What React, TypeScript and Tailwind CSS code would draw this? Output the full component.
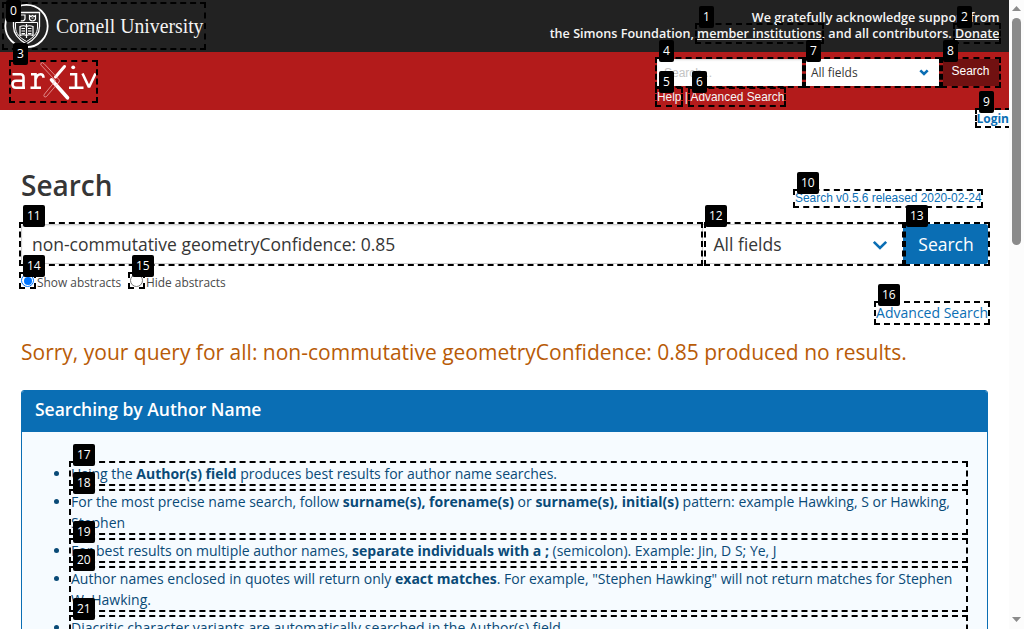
import React from "react";

type MarkData = { n: number; x: number; y: number; w: number; h: number };

const marks: MarkData[] = [
  { n: 0, x: 2, y: 2, w: 204, h: 48 },
  { n: 1, x: 695, y: 23, w: 129, h: 21 },
  { n: 2, x: 953, y: 23, w: 48, h: 21 },
  { n: 3, x: 9, y: 60, w: 89, h: 43 },
  { n: 4, x: 655, y: 57, w: 149, h: 31 },
  { n: 5, x: 655, y: 87, w: 28, h: 20 },
  { n: 6, x: 688, y: 87, w: 98, h: 20 },
  { n: 7, x: 804, y: 57, w: 137, h: 31 },
  { n: 8, x: 941, y: 57, w: 60, h: 31 },
  { n: 9, x: 975, y: 108, w: 36, h: 20 },
  { n: 10, x: 793, y: 189, w: 190, h: 19 },
  { n: 11, x: 19, y: 222, w: 684, h: 44 },
  { n: 12, x: 704, y: 222, w: 200, h: 44 },
  { n: 13, x: 904, y: 222, w: 86, h: 44 },
  { n: 14, x: 19, y: 272, w: 17, h: 17 },
  { n: 15, x: 128, y: 272, w: 17, h: 17 },
  { n: 16, x: 874, y: 301, w: 116, h: 24 },
  { n: 17, x: 69, y: 461, w: 899, h: 25 },
  { n: 18, x: 69, y: 489, w: 899, h: 46 },
  { n: 19, x: 69, y: 538, w: 899, h: 25 },
  { n: 20, x: 69, y: 566, w: 899, h: 46 },
  { n: 21, x: 69, y: 615, w: 899, h: 25 },
];

/* Badges of the abutting fields sit slightly left of their outlines. */
const badgeDx: Record<number, number> = { 7: 2, 8: 2, 12: 1, 13: 2 };

function Marks() {
  return (
    <div className="pointer-events-none absolute inset-0 overflow-hidden">
      {marks.map((m) => (
        <div
          key={m.n}
          className="absolute border-2 border-dashed border-black"
          style={{ left: m.x, top: m.y, width: m.w, height: m.h }}
        />
      ))}
      {marks.map((m) => (
        <span
          key={m.n}
          className="absolute rounded-[2px] bg-black px-1 py-0.5 text-[12px] leading-[18px] text-white"
          style={{
            left: m.x + (badgeDx[m.n] ?? 4),
            top: Math.max(0, m.y - (m.h === 20 && m.n < 7 ? 16 : 17)),
          }}
        >
          {m.n}
        </span>
      ))}
    </div>
  );
}

function CornellLogo() {
  return (
    <svg className="block h-[48px] w-[204px]" viewBox="0 0 204 48">
      <g fill="none" stroke="#fff">
        <circle cx="24.5" cy="24" r="21.2" strokeWidth="1.8" />
        <path d="M11.5 10.5h26v14c0 8-5 13-13 17.500c-8-4.500-13-9.500-13-17.500z" strokeWidth="1.3" />
        <path d="M13.500 20.500h22v4.500c0 6.500-4 10.500-11 14.500c-7-4-11-8-11-14.500z" strokeWidth="1" />
        <path d="M18 24.500q3.500-1.500 6.500 0q3-1.500 6.500 0v9q-3.500-1.500-6.500 0q-3-1.500-6.500 0zM24.500 22v14" strokeWidth="1.200" />
        <path d="M19.500 26.500h3.500M19.500 29h3.500M19.500 31.500h3.500M26 26.500h3.500M26 29h3.500M26 31.500h3.500" strokeWidth="1" />
        <path d="M17 13h6v3.500q0 2-3 2.500q-3-.5-3-2.500zM27.500 13.500l1.500 1l1.500-1l1.500 1l1.500-1v3q0 2-3 2.500q-3-.5-3-2.500zM29.500 16h2" strokeWidth="1.200" />
      </g>
      <text
        x="54"
        y="30.700"
        fill="#f4f4f4"
        fontSize="20.500"
        textLength="147.500"
        lengthAdjust="spacingAndGlyphs"
        fontFamily="'Palatino Linotype', Palatino, 'Liberation Serif', serif"
      >
        Cornell University
      </text>
    </svg>
  );
}

function ArxivLogo() {
  return (
    <svg className="block h-[39px] w-[86px]" viewBox="0 0 86 39" fill="none">
      <g stroke="#fff" strokeWidth="2.600">
        <path d="M1.500 12.300h8q3 0 3 3v11.200M12.500 18.800h-7.500q-3.500 0-3.500 3.500q0 3.500 3.500 3.500h9" />
        <path d="M20 12.300h4.500v13.500M19.500 25.800h10.500M24.500 17.500q1.500-5.200 5-5.200q3 0 3 3.500" />
        <path d="M59 12.300h6v13.500M58 25.800h14.500" />
        <path d="M71.500 11.500l6.500 13.800l6.500-13.800" strokeLinejoin="bevel" />
      </g>
      <circle cx="62.200" cy="5.300" r="1.900" fill="#fff" />
      <path d="M40.500 17.800l16 18" stroke="#fff" strokeWidth="3.600" strokeLinecap="round" />
      <path d="M53.500 4.500l-9 10.500" stroke="#fff" strokeWidth="3" strokeLinecap="round" />
      <path
        d="M30 1.300q1.500-1.500 3 .3l15 16q1 1.200 0 2.400l-12.500 14.500q-1.500 1-2.300 0q-.8-1 .3-2.400l11-13.500l-14.200-15.200q-1-1-.3-2.100z"
        stroke="#f0b9b9"
        strokeWidth=".7"
      />
    </svg>
  );
}

function Header() {
  return (
    <header>
      <div className="flex h-[52px] items-start justify-between bg-[#222] pt-0.5 pl-0.5">
        <CornellLogo />
        <p className="pt-2 pr-[9.500px] text-right text-[12.600px] leading-4 font-semibold text-[#f5f5f5]">
          We gratefully acknowledge support from
          <br />
          the Simons Foundation, <a className="underline">member institutions</a>, and all contributors.{" "}
          <a className="underline">Donate</a>
        </p>
      </div>
      <div className="flex h-[58px] justify-between bg-[#b31b1b] pr-[10px] pl-[11px]">
        <div className="pt-[10px]">
          <ArxivLogo />
        </div>
        <div className="w-[342px] pt-[7px]">
          <div className="flex h-[27px]">
            <div className="flex w-[145px] items-center bg-white pl-[7px] font-['Liberation_Sans',sans-serif] text-[12px] text-[#c4c4c4] shadow-[inset_0_1px_2px_rgba(10,10,10,0.15)]">
              Search...
            </div>
            <div className="ml-1 flex w-[133px] items-center justify-between bg-white pr-[10px] pl-[5px] text-[12px] text-[#363636]">
              All fields
              <svg className="h-[7px] w-[10px]" viewBox="0 0 10 7" fill="none">
                <path d="M1.300 1.300L5 5l3.700-3.700" stroke="#0a6eb4" strokeWidth="2.600" />
              </svg>
            </div>
            <div className="ml-1 flex w-14 items-center justify-center bg-[#711111] pr-px pb-[3px] font-['Liberation_Sans',sans-serif] text-[12px] text-white">
              Search
            </div>
          </div>
          <p className="pt-[3px] font-['Liberation_Sans',sans-serif] text-[11.900px] leading-4 text-[#f5f5f5]">
            Help | Advanced Search
          </p>
        </div>
      </div>
    </header>
  );
}

function SearchForm() {
  return (
    <section className="pr-[21px] pl-[21px]">
      <div className="flex items-start justify-between">
        <h1 className="pt-[37px] text-[28px] leading-[42px] font-semibold text-[#363636]">Search</h1>
        <a className="pt-[62px] pr-[6.500px] font-['Liberation_Sans',sans-serif] text-[11.900px] leading-[18px] text-[#0a6eb4]">
          Search v0.5.6 released 2020-02-24
        </a>
      </div>
      <div className="mt-[17px] flex h-10 text-[17.500px] text-[#363636]">
        <div className="flex w-[682px] items-center rounded-l-[3px] border border-[#cfcfcf] bg-white pt-px pl-[10px] shadow-[inset_0_1px_2px_rgba(10,10,10,0.1)]">
          non-commutative geometryConfidence: 0.85
        </div>
        <div className="flex w-[200px] items-center justify-between border-y border-[#cfcfcf] bg-white pt-px pr-[15px] pl-[10.500px]">
          All fields
          <svg className="h-[10px] w-[16px]" viewBox="0 0 16 10" fill="none">
            <path d="M1.800 1.800L8 8l6.200-6.200" stroke="#0a6eb4" strokeWidth="2.600" />
          </svg>
        </div>
        <div className="flex flex-1 items-center justify-center rounded-r-[3px] bg-[#0a6eb4] pl-px text-white">
          Search
        </div>
      </div>
      <div className="flex h-[38px] items-start text-[11.900px] leading-[18px] text-[#4a4a4a]">
        <div className="mt-[9px] flex h-[18px] w-[109px]">
          <span className="mt-px flex size-[13px] items-center justify-center rounded-full border border-[#0075ff] bg-white">
            <span className="size-2 rounded-full bg-[#0075ff]" />
          </span>
          <span className="pl-[3px]">Show abstracts</span>
        </div>
        <div className="mt-[9px] flex h-[18px]">
          <span className="mt-px size-[13px] rounded-full border border-[#767676] bg-white" />
          <span className="pl-[3px]">Hide abstracts</span>
        </div>
      </div>
      <div className="flex justify-end text-[14px] leading-[21px] text-[#0a6eb4]">Advanced Search</div>
    </section>
  );
}

function Tips() {
  return (
    <article className="mr-[21px] ml-[21px] flex-1 rounded-[3px] border border-[#0a6eb4] bg-[#f6fbff]">
      <h2 className="h-[41px] rounded-t-[2px] bg-[#0a6eb4] pt-1 pl-[13px] text-[17.500px] leading-7 font-semibold text-white">
        Searching by Author Name
      </h2>
      <ul className="flex list-disc flex-col gap-[7px] pt-[31px] pr-[21px] pl-[49px] text-[14px] leading-[21px] text-[#094a77]">
        <li>
          Using the <b>Author(s) field</b> produces best results for author name searches.
        </li>
        <li>
          For the most precise name search, follow <b>surname(s), forename(s)</b> or <b>surname(s), initial(s)</b>{" "}
          pattern: example Hawking, S or Hawking, Stephen
        </li>
        <li>
          For best results on multiple author names, <b>separate individuals with a ;</b> (semicolon). Example: Jin, D
          S; Ye, J
        </li>
        <li>
          Author names enclosed in quotes will return only <b>exact matches</b>. For example, "Stephen Hawking" will not
          return matches for Stephen W. Hawking.
        </li>
        <li>Diacritic character variants are automatically searched in the Author(s) field.</li>
      </ul>
    </article>
  );
}

function Scrollbar() {
  return (
    <div className="flex w-[15px] flex-col items-center bg-[#fcfcfc] pt-[6px] pb-[7px]">
      <svg className="h-[5px] w-[9px]" viewBox="0 0 9 5">
        <path d="M0 5L4.500 0L9 5z" fill="#8b8b8b" />
      </svg>
      <div className="mt-[7px] h-[227px] w-[9px] rounded-full bg-[#8b8b8b]" />
      <svg className="mt-auto h-[5px] w-[9px]" viewBox="0 0 9 5">
        <path d="M0 0L4.500 5L9 0z" fill="#8b8b8b" />
      </svg>
    </div>
  );
}

export default function App() {
  return (
    <div className="flex h-[629px] w-[1024px] overflow-hidden bg-white font-['Open_Sans',sans-serif]">
      <main className="relative flex h-[629px] w-[1009px] flex-col overflow-hidden">
        <Header />
        <div className="flex h-[18px] justify-end text-[12px] leading-[17px] font-bold text-[#0a6eb4]">Login</div>
        <SearchForm />
        <p className="pt-[12px] pb-[21px] pl-[21px] text-[21px] leading-[34px] text-[#b85b07]">
          Sorry, your query for all: non-commutative geometryConfidence: 0.85 produced no results.
        </p>
        <Tips />
        <Marks />
      </main>
      <Scrollbar />
    </div>
  );
}
